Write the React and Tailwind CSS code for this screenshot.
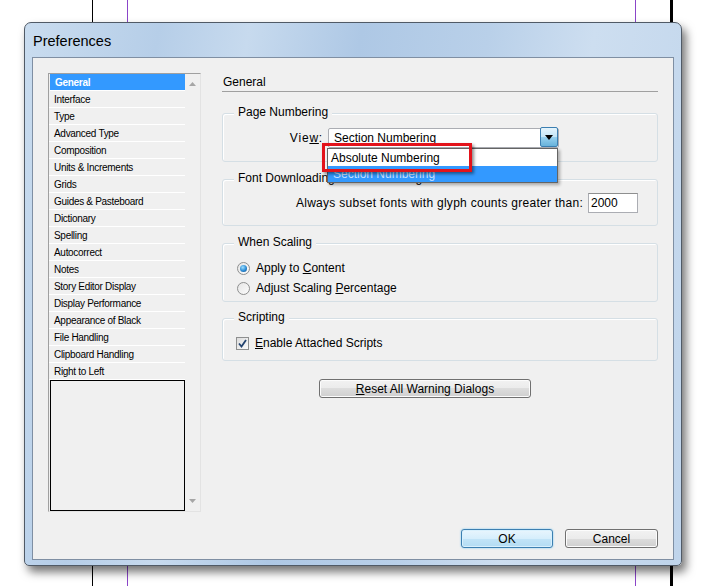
import React from "react";

const items = [
  "General",
  "Interface",
  "Type",
  "Advanced Type",
  "Composition",
  "Units & Increments",
  "Grids",
  "Guides & Pasteboard",
  "Dictionary",
  "Spelling",
  "Autocorrect",
  "Notes",
  "Story Editor Display",
  "Display Performance",
  "Appearance of Black",
  "File Handling",
  "Clipboard Handling",
  "Right to Left",
];

function Group({ title, className, children }) {
  return (
    <div className={"rounded-[3px] border border-[#d5dfe5] shadow-[inset_1px_1px_0_#fff] " + className}>
      <div className="-mt-[9px] ml-[11px] w-fit bg-[#f0f0f0] px-[4px] leading-[15px] whitespace-nowrap">{title}</div>
      {children}
    </div>
  );
}

function Radio({ checked }) {
  return (
    <div className="flex h-[13px] w-[13px] items-center justify-center rounded-full border border-[#8e8f8f] bg-[linear-gradient(135deg,#e6e6e6,#fbfbfb)]">
      {checked && (
        <div className="h-[7px] w-[7px] rounded-full bg-[radial-gradient(circle_at_40%_35%,#9fe0ff,#2a8ad4_55%,#0d4a85)]" />
      )}
    </div>
  );
}

function WinButton({ children, className }) {
  return (
    <div
      className={
        "flex items-center justify-center rounded-[3px] border border-[#707070] bg-[linear-gradient(#f2f2f2,#ebebeb_50%,#dddddd_50%,#cfcfcf)] shadow-[inset_0_0_0_1px_#fcfcfc] leading-none " +
        className
      }
    >
      {children}
    </div>
  );
}

export default function App() {
  return (
    <div
      className="relative h-[586px] w-[710px] overflow-hidden bg-white text-[12px] text-black"
      style={{ fontFamily: '"Liberation Sans", Arial, sans-serif' }}
    >
      {/* page guides behind the dialog */}
      <div className="absolute left-[92px] top-0 h-full w-px bg-black" />
      <div className="absolute left-[127px] top-0 h-full w-px bg-[#8b45c9]" />
      <div className="absolute left-[635px] top-0 h-full w-px bg-[#8b45c9]" />
      <div className="absolute left-[670px] top-0 h-full w-[3px] bg-black" />

      <div className="relative z-10 pl-[24px] pt-[22px]">
        <div className="flex h-[544px] w-[658px] flex-col rounded-t-[7px] rounded-b-[5px] border border-[#505a66] bg-[linear-gradient(100deg,#c9dcef_0%,#b6cee8_18%,#c7daee_30%,#aec8e5_45%,#b9d0e9_62%,#cddef0_76%,#bfd4eb_100%)] shadow-[4px_6px_10px_rgba(0,0,0,0.55)]">
          <div className="flex h-[34px] items-center pl-[8px] pt-[3px] text-[14.5px] leading-none text-black">
            Preferences
          </div>

          <div className="mx-[7px] mb-[5px] flex flex-1 flex-col border border-[#7f8fa3] bg-[#f0f0f0]">
            <div className="flex pl-[15px] pt-[15px]">
              {/* category list */}
              <div className="flex h-[439px] w-[153px] border border-[#a0a0a0] border-b-[#e3e3e3] border-r-[#e3e3e3] bg-[#f0f0f0]">
                <div
                  className="flex w-[136px] flex-col text-[10px] tracking-[-0.3px]"
                  style={{ fontFamily: 'Tahoma, "Liberation Sans", sans-serif' }}
                >
                  {items.map((it, i) => (
                    <div
                      key={it}
                      className={
                        "flex h-[17px] shrink-0 items-center border-b border-white pl-[5px] " +
                        (i === 0 ? "ml-[1px] bg-[#3399ff] font-bold text-white" : "")
                      }
                    >
                      {it}
                    </div>
                  ))}
                  <div className="ml-[1px] flex-1 border border-black" />
                </div>
                <div className="flex flex-1 flex-col items-center justify-between py-[8px]">
                  <svg width="7" height="4" viewBox="0 0 7 4">
                    <path d="M0 4 L3.5 0 L7 4 Z" fill="#a6a6a6" />
                  </svg>
                  <svg width="7" height="4" viewBox="0 0 7 4">
                    <path d="M0 0 L7 0 L3.5 4 Z" fill="#a6a6a6" />
                  </svg>
                </div>
              </div>

              {/* right panel */}
              <div className="ml-[21px] flex w-[436px] flex-col">
                <div className="h-[19px] border-b border-[#a0a0a0] pl-[1px] pt-[2px] leading-[15px]">General</div>

                <Group title="Page Numbering" className="mt-[21px] pb-[13px]">
                  <div className="mt-[8px] flex h-[20px] items-center justify-end pr-[98px]">
                    <span className="mr-[5px] tracking-[0.8px]">
                      Vie<u>w</u>:
                    </span>
                    <div className="relative h-[20px] w-[231px]">
                      <div className="flex h-full items-center rounded-[2px] border border-[#abadb3] bg-white pl-[5px]">
                        Section Numbering
                      </div>
                      <div className="absolute right-[1px] top-[-1px] flex h-[20px] w-[18px] items-center justify-center rounded-[2px] border border-[#3c7fb1] bg-[linear-gradient(#e5f4fc,#c4e5f6_50%,#98d1ef_50%,#68b3db)]">
                        <svg width="8" height="5" viewBox="0 0 8 5">
                          <path d="M0 0 L8 0 L4 5 Z" fill="#000" />
                        </svg>
                      </div>
                      {/* open dropdown list */}
                      <div className="absolute left-[-1px] top-[20px] z-20 flex w-[231px] flex-col border border-[#646464] bg-white shadow-[2px_2px_3px_rgba(0,0,0,0.3)]">
                        <div className="flex h-[17px] items-center pl-[3px]">Absolute Numbering</div>
                        <div className="flex h-[16px] items-center bg-[#3399ff] pl-[5px] text-[#c9e2ff]">
                          Section Numbering
                        </div>
                      </div>
                      {/* red highlight frame */}
                      <div className="absolute left-[-6px] top-[15px] z-30 h-[29px] w-[150px] border-[3px] border-[#e3131b] shadow-[2px_2px_3px_rgba(0,0,0,0.45)]" />
                    </div>
                  </div>
                </Group>

                <Group title="Font Downloading and Embedding" className="mt-[17px] pb-[12px]">
                  <div className="mt-[7px] flex h-[20px] items-center justify-end pr-[19px]">
                    <span className="tracking-[0.28px]">Always subset fonts with glyph counts greater than:</span>
                    <div className="ml-[5px] flex h-[20px] w-[50px] items-center border border-[#abadb3] border-t-[#8e8f8f] bg-white pl-[2px]">
                      2000
                    </div>
                  </div>
                </Group>

                <Group title="When Scaling" className="mt-[17px] pb-[3px]">
                  <div className="mt-[8px] flex h-[20px] items-center gap-[6px] pl-[14px]">
                    <Radio checked />
                    <span>
                      Apply to <u>C</u>ontent
                    </span>
                  </div>
                  <div className="flex h-[20px] items-center gap-[6px] pl-[14px]">
                    <Radio />
                    <span>
                      Adjust Scaling <u>P</u>ercentage
                    </span>
                  </div>
                </Group>

                <Group title="Scripting" className="mt-[16px] pb-[7px]">
                  <div className="mt-[8px] flex h-[20px] items-center gap-[6px] pl-[13px]">
                    <div className="flex h-[13px] w-[13px] items-center justify-center border border-[#8e8f8f] bg-[linear-gradient(135deg,#dcdcdc,#fbfbfb)]">
                      <svg width="9" height="9" viewBox="0 0 9 9">
                        <path d="M1 4.5 L3.5 7.5 L8 1" fill="none" stroke="#23436f" strokeWidth="1.8" />
                      </svg>
                    </div>
                    <span>
                      <u>E</u>nable Attached Scripts
                    </span>
                  </div>
                </Group>

                <WinButton className="ml-[97px] mt-[18px] h-[19px] w-[212px]">
                  <span>
                    <u>R</u>eset All Warning Dialogs
                  </span>
                </WinButton>
              </div>
            </div>

            <div className="mt-[17px] flex justify-end gap-[12px] pr-[15px]">
              <div className="flex h-[19px] w-[92px] items-center justify-center rounded-[3px] border border-[#3c7fb1] bg-[linear-gradient(#e8f5fd,#d6eefc_50%,#c2e4f8_50%,#b3dcf3)] shadow-[inset_0_0_0_1px_#d8f0fd,0_0_2px_#6fc4f2] leading-none">
                OK
              </div>
              <WinButton className="h-[19px] w-[93px]">Cancel</WinButton>
            </div>
          </div>
        </div>
      </div>
    </div>
  );
}
